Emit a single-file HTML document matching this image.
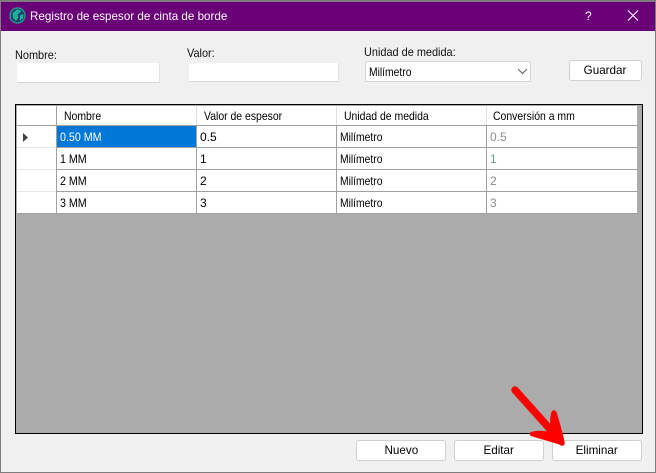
<!DOCTYPE html>
<html><head><meta charset="utf-8">
<style>
html,body{margin:0;padding:0;width:656px;height:473px;overflow:hidden;background:#f0f0f0}
*{box-sizing:border-box}
body{position:relative;font-family:"Liberation Sans",sans-serif;font-size:12px;color:#000}
.a{position:absolute;white-space:nowrap}
.t{position:absolute;white-space:nowrap;line-height:14px;height:14px;transform-origin:0 50%}
.m{transform:scaleX(.86)}
.d{transform:scaleX(.89)}
.hd{transform:scaleX(.87)}
.l{transform:scaleX(.91);color:#111}
.btn{position:absolute;background:#fff;border:1px solid #d0d0d0;border-radius:3px;text-align:center;line-height:18px;height:21px}
.btn span{display:inline-block;transform:scaleX(.97)}
.inp{position:absolute;background:#fff;border-bottom:1px solid #d8d8d8;border-right:1px solid #e4e4e4}
.h{position:absolute;background:#a0a0a0}
.v{position:absolute;background:#a0a0a0;width:1px}
.g{color:#8c8c8c}
</style></head><body>
<!-- window frame -->
<div class="a" style="left:0;top:0;width:656px;height:473px;border:1px solid #7d7d7d;border-top:2px solid #7d7d7d"></div>
<div class="a" style="left:1px;top:2px;width:654px;height:29px;background:#690078"></div>
<svg class="a" style="left:9px;top:7px" width="17" height="17" viewBox="0 0 17 17">
<circle cx="8.5" cy="8.5" r="7.5" fill="#123d6e" stroke="#1f9c8c" stroke-width="1.4"/>
<path d="M3.5 6 L8 2.5 L11 3 L12 5 L9 7 L9 11 L7 14 L4 11 Z M11 8 L14.5 7 L14 11 L11 14 Z" fill="#1fb09a"/>
</svg>
<div class="t" style="left:30px;top:9px;color:#fff;transform:scaleX(.97)">Registro de espesor de cinta de borde</div>
<div class="t" style="left:585px;top:9px;color:#fff">?</div>
<svg class="a" style="left:627px;top:9px" width="13" height="13" viewBox="0 0 13 13"><path d="M1 1.5L11 11.5M11 1.5L1 11.5" stroke="#fff" stroke-width="1" fill="none"/></svg>

<!-- form -->
<div class="t l" style="left:15px;top:48px">Nombre:</div>
<div class="inp" style="left:17px;top:63px;width:143px;height:20px"></div>
<div class="t l" style="left:187px;top:46px">Valor:</div>
<div class="inp" style="left:189px;top:63px;width:150px;height:19px"></div>
<div class="t l" style="left:364px;top:45px">Unidad de medida:</div>
<div class="a" style="left:365px;top:61px;width:166px;height:21px;background:#fff;border:1px solid #d4d4d4;border-radius:2px"></div>
<div class="t m" style="left:369px;top:65px">Milímetro</div>
<svg class="a" style="left:517px;top:68px" width="11" height="7" viewBox="0 0 11 7"><path d="M1 1L5.5 5.5L10 1" stroke="#606060" fill="none"/></svg>
<div class="btn" style="left:569px;top:60px;width:73px"><span>Guardar</span></div>

<!-- grid -->
<div class="a" style="left:15px;top:104px;width:628px;height:330px;background:#ababab;border:1px solid #000"></div>
<div class="a" style="left:17px;top:106px;width:620px;height:108px;background:#fff"></div>
<div class="a" style="left:57px;top:126px;width:140px;height:21px;background:#0078d7"></div>
<div class="a" style="left:17px;top:125px;width:620px;height:1px;background:#a0a0a0"></div>
<div class="a" style="left:17px;top:147px;width:39px;height:1px;background:#e6e6e6"></div>
<div class="a" style="left:17px;top:169px;width:39px;height:1px;background:#e6e6e6"></div>
<div class="a" style="left:17px;top:191px;width:39px;height:1px;background:#e6e6e6"></div>
<div class="h" style="left:56px;top:147px;width:581px;height:1px"></div>
<div class="h" style="left:56px;top:169px;width:581px;height:1px"></div>
<div class="h" style="left:56px;top:191px;width:581px;height:1px"></div>
<div class="h" style="left:17px;top:213px;width:620px;height:1px"></div>
<div class="v" style="left:56px;top:106px;height:107px"></div>
<div class="a" style="left:196px;top:106px;width:1px;height:19px;background:#e0e0e0"></div>
<div class="a" style="left:336px;top:106px;width:1px;height:19px;background:#e0e0e0"></div>
<div class="a" style="left:486px;top:106px;width:1px;height:19px;background:#e0e0e0"></div>
<div class="v" style="left:196px;top:126px;height:87px"></div>
<div class="v" style="left:336px;top:126px;height:87px"></div>
<div class="v" style="left:486px;top:126px;height:87px"></div>
<svg class="a" style="left:22px;top:132px" width="7" height="11" viewBox="0 0 7 11"><path d="M1 1L6 5.5L1 10Z" fill="#404040"/></svg>

<div class="t hd" style="left:64px;top:109px">Nombre</div>
<div class="t hd" style="left:204px;top:109px">Valor de espesor</div>
<div class="t hd" style="left:344px;top:109px">Unidad de medida</div>
<div class="t hd" style="left:493px;top:109px">Conversión a mm</div>

<div class="t d" style="left:60px;top:130px;color:#fff">0.50 MM</div>
<div class="t d" style="left:60px;top:152px">1 MM</div>
<div class="t d" style="left:60px;top:174px">2 MM</div>
<div class="t d" style="left:60px;top:196px">3 MM</div>
<div class="t" style="left:200px;top:130px">0.5</div>
<div class="t" style="left:200px;top:152px">1</div>
<div class="t" style="left:200px;top:174px">2</div>
<div class="t" style="left:200px;top:196px">3</div>
<div class="t m" style="left:340px;top:130px">Milímetro</div>
<div class="t m" style="left:340px;top:152px">Milímetro</div>
<div class="t m" style="left:340px;top:174px">Milímetro</div>
<div class="t m" style="left:340px;top:196px">Milímetro</div>
<div class="t g" style="left:490px;top:130px">0.5</div>
<div class="t g" style="left:490px;top:152px;color:#6f9a80">1</div>
<div class="t g" style="left:490px;top:174px">2</div>
<div class="t g" style="left:490px;top:196px">3</div>

<!-- buttons -->
<div class="btn" style="left:356px;top:440px;width:90px"><span>Nuevo</span></div>
<div class="btn" style="left:454px;top:440px;width:90px"><span>Editar</span></div>
<div class="btn" style="left:552px;top:440px;width:90px"><span>Eliminar</span></div>

<!-- arrow -->
<svg class="a" style="left:500px;top:380px" width="80" height="75" viewBox="0 0 80 75" fill="none" stroke="#f00" stroke-linecap="round" stroke-linejoin="round">
<path d="M15 10L58 58" stroke-width="7.5"/>
<path d="M54 33 C52 40 53 48 55 56 L62 63 C60 53 57 43 54 33Z" fill="#f00" stroke-width="5.5"/>
<path d="M32 54 C40 52 47 53 55 56 L62 63 C52 60 42 57 32 54Z" fill="#f00" stroke-width="4.5"/>
</svg>
</body></html>
